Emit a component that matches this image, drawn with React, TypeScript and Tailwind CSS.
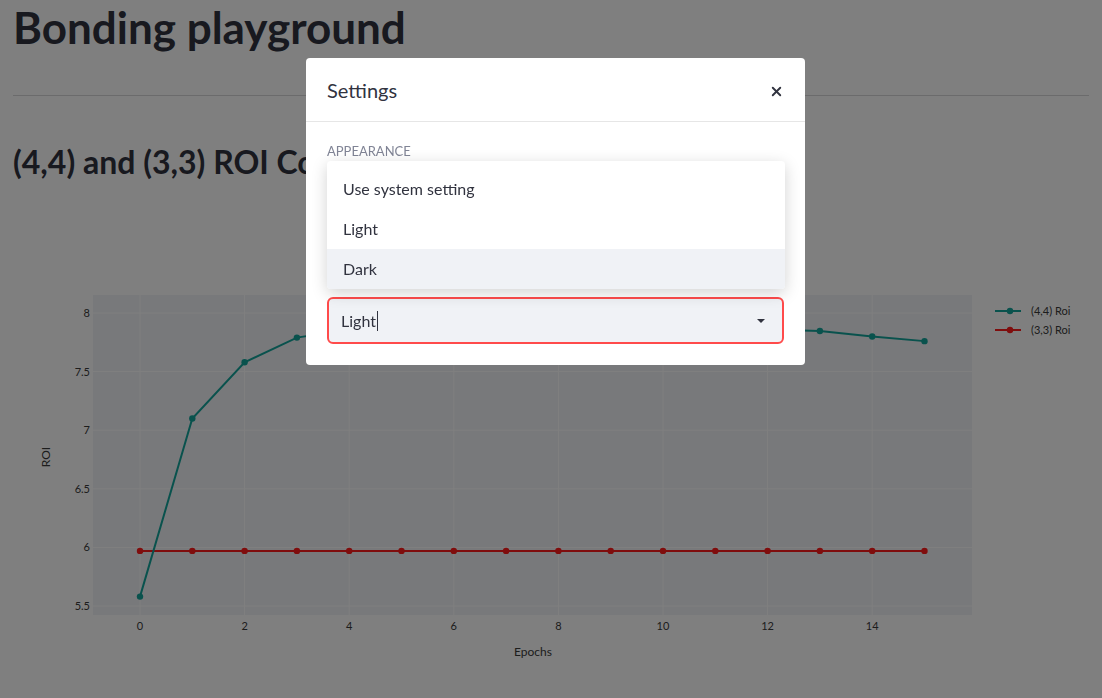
import { X } from "lucide-react"

const roi44 = [5.58, 7.1, 7.58, 7.79, 7.86, 7.9, 7.92, 7.93, 7.93, 7.92, 7.9, 7.88, 7.86, 7.846, 7.8, 7.76]
const roi33 = Array.from({ length: 16 }, () => 5.97)

// plot area in page coordinates
const left = 93
const right = 972
const top = 295
const bottom = 615
const px = (e: number) => 140 + e * 52.3
const py = (v: number) => 313 + (8 - v) * 117.2

function RoiChart() {
  const yTicks = [8, 7.5, 7, 6.5, 6, 5.5]
  const xTicks = [0, 2, 4, 6, 8, 10, 12, 14]
  const teal = "#13a49b"
  const red = "#ff1a1a"
  return (
    <svg width={1089} height={440} className="block">
      <g transform="translate(-13,-245)">
        <rect x={left} y={top} width={right - left} height={bottom - top} fill="#f0f2f6" />
        {xTicks.map((t) => (
          <line key={`gx${t}`} x1={px(t)} x2={px(t)} y1={top} y2={bottom} stroke="#ffffff" strokeWidth={1} />
        ))}
        {yTicks.map((t) => (
          <line key={`gy${t}`} x1={left} x2={right} y1={py(t)} y2={py(t)} stroke="#ffffff" strokeWidth={1} />
        ))}
        <polyline
          points={roi33.map((v, i) => `${px(i)},${py(v)}`).join(" ")}
          fill="none"
          stroke={red}
          strokeWidth={2}
        />
        {roi33.map((v, i) => (
          <circle key={`r${i}`} cx={px(i)} cy={py(v)} r={3.2} fill={red} />
        ))}
        <polyline
          points={roi44.map((v, i) => `${px(i)},${py(v)}`).join(" ")}
          fill="none"
          stroke={teal}
          strokeWidth={2}
        />
        {roi44.map((v, i) => (
          <circle key={`t${i}`} cx={px(i)} cy={py(v)} r={3.2} fill={teal} />
        ))}
        <g fontFamily="Lato, sans-serif" fontSize={11} fill="#3a3a3a">
          {yTicks.map((t) => (
            <text key={`ly${t}`} x={90} y={py(t) + 4} textAnchor="end">
              {t}
            </text>
          ))}
          {xTicks.map((t) => (
            <text key={`lx${t}`} x={px(t)} y={630} textAnchor="middle">
              {t}
            </text>
          ))}
          <text x={533} y={656} textAnchor="middle" fontSize={12}>
            Epochs
          </text>
          <text x={50} y={457} textAnchor="middle" fontSize={12} transform="rotate(-90 50 457)">
            ROI
          </text>
          <line x1={995} x2={1021} y1={311} y2={311} stroke={teal} strokeWidth={2} />
          <circle cx={1010} cy={311} r={3.2} fill={teal} />
          <text x={1031} y={315}>(4,4) Roi</text>
          <line x1={995} x2={1021} y1={330} y2={330} stroke={red} strokeWidth={2} />
          <circle cx={1010} cy={330} r={3.2} fill={red} />
          <text x={1031} y={334}>(3,3) Roi</text>
        </g>
      </g>
    </svg>
  )
}

function SettingsDialog() {
  return (
    <div className="fixed left-[306px] top-[58px] w-[499px] rounded-[4px] bg-white text-[#31333F]">
      <div className="flex h-[64px] items-center justify-between border-b border-[#e6e6e6] pl-[21px] pr-[21px]">
        <span className="text-[20px]">Settings</span>
        <X size={15} strokeWidth={3} className="mt-[3px] text-[#31333F]" />
      </div>
      <div className="relative px-[21px] pt-[21px] pb-[21px]">
        <div className="text-[13px] leading-[16px] text-[#808495]">APPEARANCE</div>
        <div className="mt-[138px] flex h-[47px] items-center justify-between rounded-[6px] border-2 border-[#ff4b4b] bg-[#f0f2f6] pl-[12px] pr-[17px]">
          <span className="flex items-center text-[16px]">
            Light
            <span className="ml-[1px] inline-block h-[20px] w-[1px] bg-[#31333F]" />
          </span>
          <svg width="8" height="4" viewBox="0 0 8 4">
            <path d="M0 0 L8 0 L4 4 Z" fill="#31333F" />
          </svg>
        </div>
        <div className="absolute left-[21px] right-[20px] top-[39px] overflow-hidden rounded-[4px] bg-white pt-2 shadow-[0_4px_16px_rgba(0,0,0,0.18)]">
          <div className="flex h-[40px] items-center px-4 text-[16px]">Use system setting</div>
          <div className="flex h-[40px] items-center px-4 text-[16px]">Light</div>
          <div className="flex h-[40px] items-center bg-[#f0f2f6] px-4 text-[16px]">Dark</div>
        </div>
      </div>
    </div>
  )
}

export default function App() {
  return (
    <div className="h-[698px] overflow-hidden bg-white font-['Lato',sans-serif] text-[#31333F]">
      <div className="px-[13px]">
        <h1 className="pt-[2px] text-[44px] font-bold leading-[50px]">Bonding playground</h1>
        <hr className="mt-[43px] border-t border-[#d6d6d9]" />
        <h2 className="mt-[46px] text-[32px] font-bold leading-[40px]">(4,4) and (3,3) ROI Comparison</h2>
        <div className="mt-[63px]">
          <RoiChart />
        </div>
      </div>
      <div className="fixed inset-0 bg-black/50" />
      <SettingsDialog />
    </div>
  )
}
